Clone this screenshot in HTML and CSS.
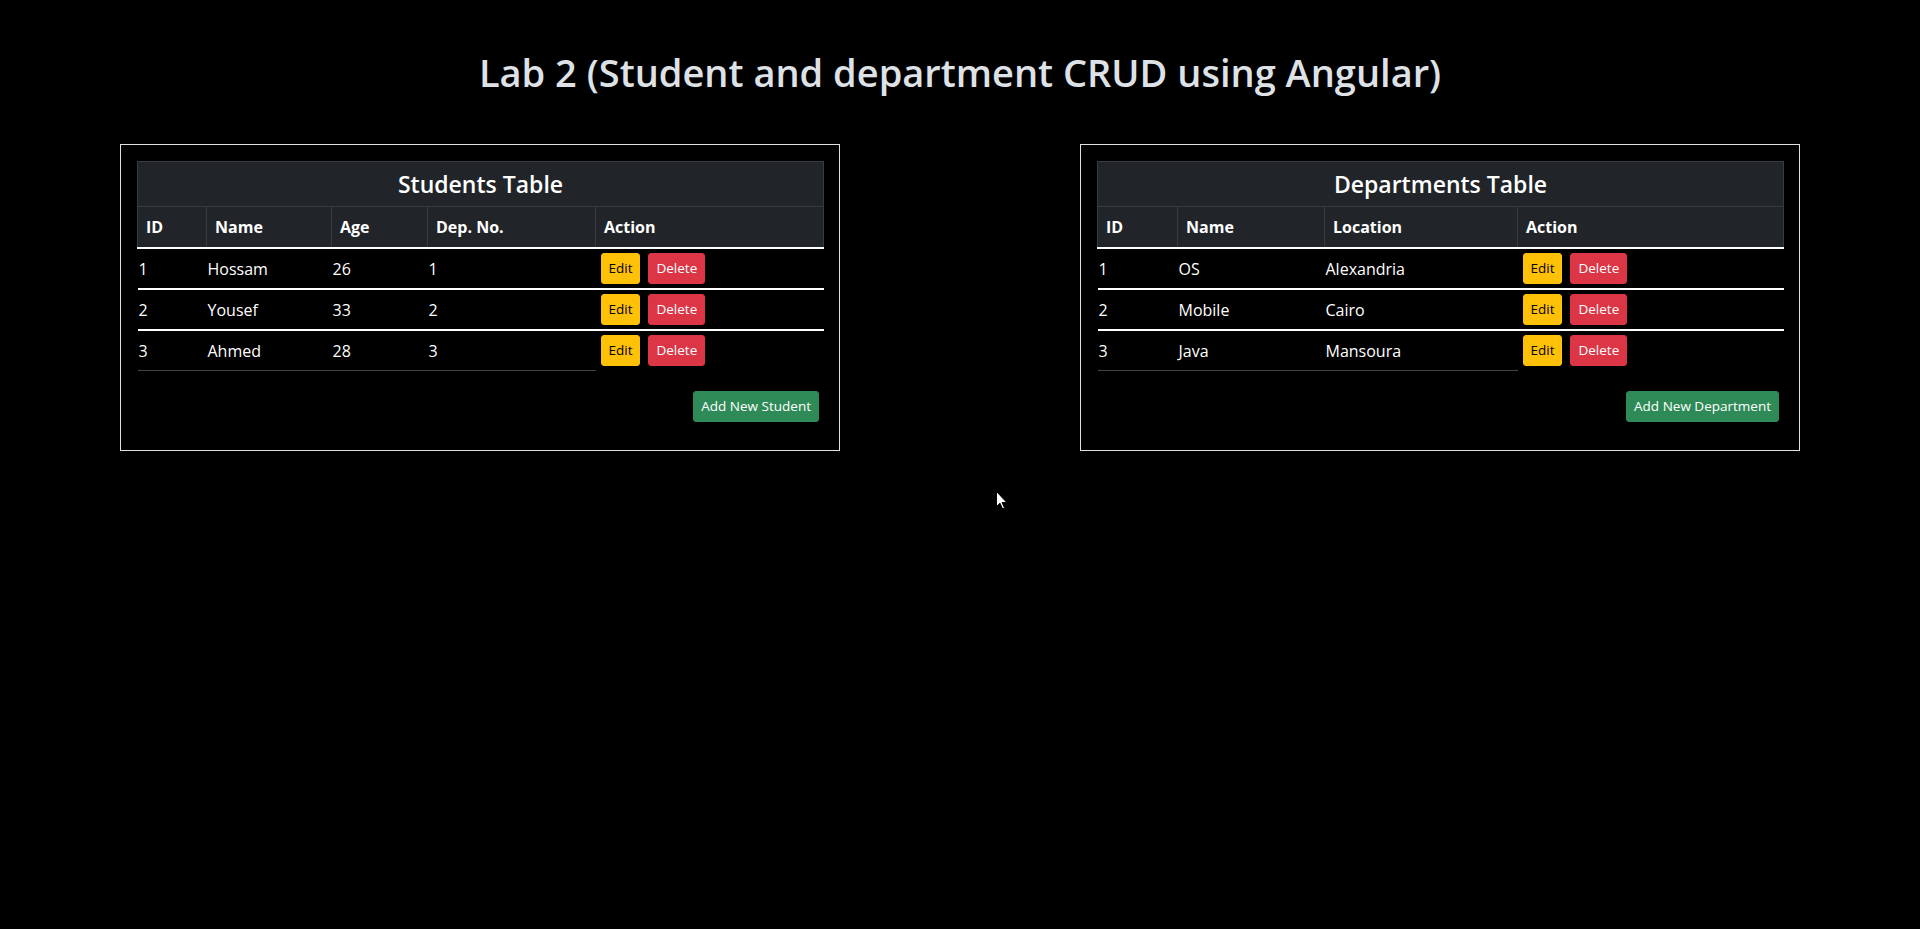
FILE: index.html
```html
<!DOCTYPE html>
<html lang="en">
<head>
<meta charset="utf-8">
<title>Lab 2</title>
<link rel="stylesheet" href="styles.css">
</head>
<body>
<h1 class="page-title">Lab 2 (Student and department CRUD using Angular)</h1>
<div class="row">
  <div class="col">
    <div class="card">
      <table class="data-table">
        <colgroup>
          <col style="width:69px"><col style="width:125px"><col style="width:96px"><col style="width:168px"><col style="width:228px">
        </colgroup>
        <thead>
          <tr><th class="caption" colspan="5">Students Table</th></tr>
          <tr class="head-row"><th>ID</th><th>Name</th><th>Age</th><th>Dep. No.</th><th>Action</th></tr>
        </thead>
        <tbody>
          <tr><td>1</td><td>Hossam</td><td>26</td><td>1</td><td class="act"><button class="btn btn-edit">Edit</button><button class="btn btn-delete">Delete</button></td></tr>
          <tr><td>2</td><td>Yousef</td><td>33</td><td>2</td><td class="act"><button class="btn btn-edit">Edit</button><button class="btn btn-delete">Delete</button></td></tr>
          <tr><td>3</td><td>Ahmed</td><td>28</td><td>3</td><td class="act"><button class="btn btn-edit">Edit</button><button class="btn btn-delete">Delete</button></td></tr>
        </tbody>
      </table>
      <div class="card-footer"><button class="btn btn-add">Add New Student</button></div>
    </div>
  </div>
  <div class="col">
    <div class="card">
      <table class="data-table">
        <colgroup>
          <col style="width:80px"><col style="width:147px"><col style="width:193px"><col style="width:266px">
        </colgroup>
        <thead>
          <tr><th class="caption" colspan="4">Departments Table</th></tr>
          <tr class="head-row"><th>ID</th><th>Name</th><th>Location</th><th>Action</th></tr>
        </thead>
        <tbody>
          <tr><td>1</td><td>OS</td><td>Alexandria</td><td class="act"><button class="btn btn-edit">Edit</button><button class="btn btn-delete">Delete</button></td></tr>
          <tr><td>2</td><td>Mobile</td><td>Cairo</td><td class="act"><button class="btn btn-edit">Edit</button><button class="btn btn-delete">Delete</button></td></tr>
          <tr><td>3</td><td>Java</td><td>Mansoura</td><td class="act"><button class="btn btn-edit">Edit</button><button class="btn btn-delete">Delete</button></td></tr>
        </tbody>
      </table>
      <div class="card-footer"><button class="btn btn-add">Add New Department</button></div>
    </div>
  </div>
</div>
<svg class="cursor" width="12" height="19" viewBox="0 0 12 19" xmlns="http://www.w3.org/2000/svg">
  <path d="M0.5 0.5 L0.5 15.5 L4 12.2 L6.6 18 L8.6 17.1 L6.1 11.5 L10.8 11.5 Z" fill="#fff" stroke="#000" stroke-width="1"/>
</svg>
</body>
</html>
```
FILE: styles.css
```css
* { box-sizing: border-box; }
html, body { margin: 0; padding: 0; }
body {
  background: #000;
  color: #dee2e6;
  font-family: "Open Sans", "Noto Sans", sans-serif;
  font-size: 16px;
  line-height: 1.5;
  min-height: 929px;
  position: relative;
}
.page-title {
  margin: 0;
  padding: 50px 0 48px;
  text-align: center;
  font-size: 38px;
  font-weight: 600;
  line-height: 1.2;
  color: #dee2e6;
}
.row {
  display: flex;
}
.col {
  flex: 0 0 50%;
}
.card {
  width: 720px;
  margin: 0 auto;
  border: 1px solid #dee2e6;
  padding: 16px 16px 11px;
}
.data-table {
  width: 686px;
  border-collapse: collapse;
  table-layout: fixed;
  color: #fff;
}
.data-table th {
  background: #212529;
  border: 1px solid #373b3e;
  text-align: left;
  font-weight: 700;
  padding: 8px;
  line-height: 24px;
}
.data-table th.caption {
  text-align: center;
  font-size: 23px;
  font-weight: 600;
  line-height: 28.8px;
  padding: 8px;
}
.data-table .head-row th {
  border-bottom: 2px solid #fff;
}
.data-table td {
  padding: 4px 0 4px 1px;
  height: 39px;
  vertical-align: middle;
  text-align: left;
  white-space: nowrap;
}
.data-table tbody tr:not(:last-child) td {
  border-bottom: 2px solid #fff;
}
.data-table tbody tr:last-child td {
  height: 38px;
}
.data-table tbody tr:last-child td:not(.act) {
  border-bottom: 1px solid #444;
}
.data-table td.act {
  padding-left: 5px;
}
.btn {
  font-family: inherit;
  font-size: 13.5px;
  line-height: 21px;
  padding: 4px 7px;
  border: 1px solid transparent;
  border-radius: 3px;
  cursor: pointer;
  vertical-align: middle;
}
.btn-edit {
  background: #ffc107;
  border-color: #ffc107;
  color: #000;
  margin-right: 8px;
}
.btn-delete {
  background: #dc3545;
  border-color: #dc3545;
  color: #fff;
}
.card-footer {
  display: flex;
  justify-content: flex-end;
  padding: 20px 4px 17px 0;
}
.btn-add {
  background: #2e8b57;
  border-color: #2e8b57;
  color: #fff;
}
.cursor {
  position: absolute;
  left: 996px;
  top: 491px;
}
```
